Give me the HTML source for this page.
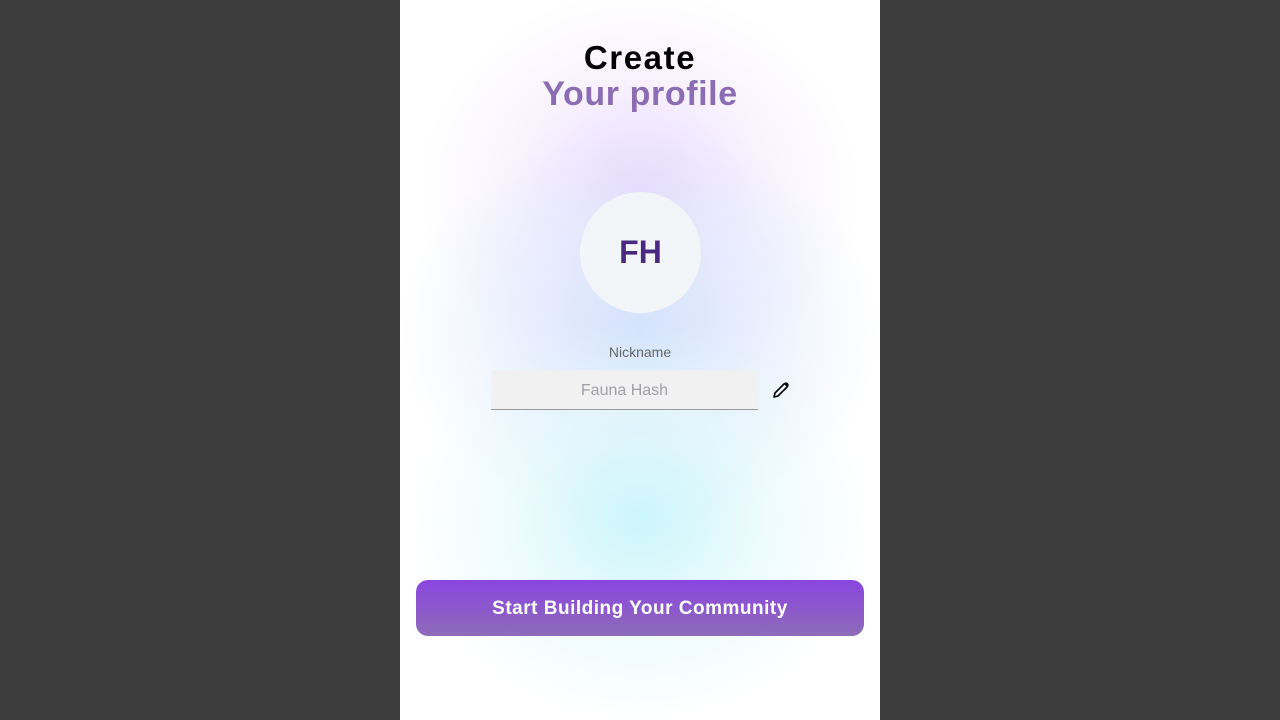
<!DOCTYPE html>
<html><head><style>
html,body{margin:0;width:1280px;height:720px;background:#3d3d3d;overflow:hidden;font-family:"Liberation Sans",sans-serif}
.p{position:absolute;left:400px;top:0;width:480px;height:720px;background:#fff;overflow:hidden}
.g{position:absolute;left:0;top:0;width:480px;height:720px;
background:
radial-gradient(ellipse 230px 200px at 240px 520px, rgba(200,245,250,.95), rgba(220,248,252,.5) 55%, rgba(255,255,255,0) 100%),
radial-gradient(ellipse 240px 200px at 240px 330px, rgba(210,225,252,.95), rgba(220,230,252,.5) 55%, rgba(255,255,255,0) 100%),
radial-gradient(ellipse 220px 200px at 240px 190px, rgba(230,215,252,.95), rgba(240,230,254,.5) 55%, rgba(255,255,255,0) 100%);}
.t1{position:absolute;top:39px;width:480px;text-align:center;font-weight:bold;font-size:33px;color:#000;letter-spacing:1.6px}
.t2{position:absolute;top:75px;width:480px;text-align:center;font-weight:bold;font-size:34px;color:#8c6db4;letter-spacing:0.6px}
.av{position:absolute;left:180px;top:192px;width:121px;height:121px;border-radius:50%;background:#f4f5f8;text-align:center;line-height:121px;font-weight:bold;font-size:32px;color:#4a2a80}
.lab{position:absolute;top:344px;width:480px;text-align:center;font-size:14px;color:#666}
.in{position:absolute;left:91px;top:370px;width:267px;height:39px;background:#f1f1f1;border-bottom:1px solid #999;text-align:center;line-height:41px;font-size:16px;color:#a0a0a8}
.btn{position:absolute;left:16px;top:580px;width:448px;height:56px;border-radius:12px;background:linear-gradient(#8a45e0,#8e6cb8);color:#fff;font-weight:bold;font-size:19px;text-align:center;line-height:58px;letter-spacing:0.5px}
</style></head><body>
<div class="p"><div class="g"></div>
<div class="t1">Create</div>
<div class="t2">Your profile</div>
<div class="av">FH</div>
<div class="lab">Nickname</div>
<div class="in">Fauna Hash</div>
<svg style="position:absolute;left:372px;top:381px" width="18" height="18" viewBox="0 0 18 18"><path d="M2 16 L3 12 L12 3 Q14 1.5 15.5 3 Q16.5 4.5 15 6 L6 15 Z" fill="none" stroke="#000" stroke-width="1.6" stroke-linejoin="round"/><path d="M12 3 L15 6 L16 4 L14 2Z" fill="#000"/></svg>
<div class="btn">Start Building Your Community</div>
</div>
</body></html>
